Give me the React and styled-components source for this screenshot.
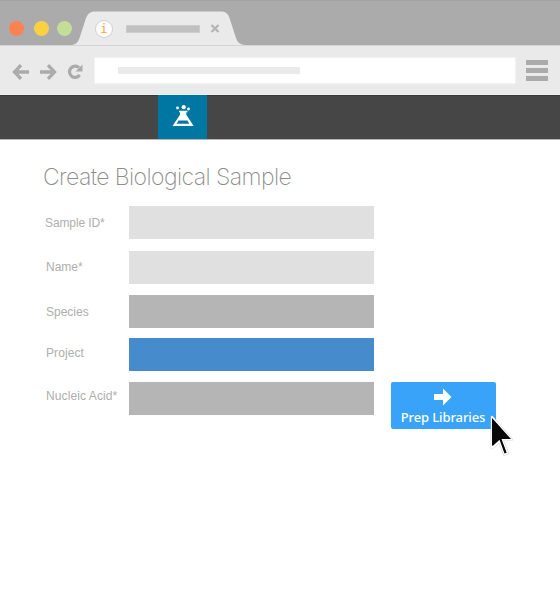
import React from 'react';
import styled, { createGlobalStyle } from 'styled-components';

const GlobalStyle = createGlobalStyle`
  * { box-sizing: border-box; }
  body { margin: 0; background: #fff; }
`;

const Window = styled.div`
  width: 560px;
  height: 600px;
  overflow: hidden;
  background: #fff;
  font-family: 'Liberation Sans', sans-serif;
`;

const TabStrip = styled.header`
  position: relative;
  display: flex;
  height: 45px;
  background: #ababab;
  box-shadow: inset 0 1px #a3a3a3;
`;

const WindowControls = styled.div`
  display: flex;
  width: 73px;
  padding: 21px 0 0 9px;
`;

const ControlDot = styled.span`
  flex: none;
  width: 15px;
  height: 15px;
  margin-right: ${({ $gap }) => $gap}px;
  border-radius: 50%;
  background: ${({ $color }) => $color};
`;

const Tab = styled.div`
  position: relative;
  display: flex;
  align-items: center;
  width: 174px;
  height: 45px;
  padding: 12px 0 0 22px;
`;

const TabShape = styled.svg`
  position: absolute;
  top: 0;
  left: 0;
`;

const Favicon = styled.span`
  position: relative;
  width: 18px;
  height: 18px;
  border: 1px solid #d2d0ce;
  border-radius: 50%;
  background: #fff;
  color: #f9a63f;
  font: 13px/15px 'DejaVu Sans Mono', monospace;
  text-align: center;
`;

const TabTitle = styled.span`
  position: relative;
  width: 74px;
  height: 8px;
  margin-left: 13px;
  background: #c0c0c0;
  border: 1px solid #cdcdcd;
`;

const CloseIcon = styled.svg`
  position: relative;
  margin-left: 10px;
`;

const Toolbar = styled.div`
  display: flex;
  height: 50px;
  padding: 12px 0 0 11px;
  background: #eaeaea;
  border-top: 1px solid #d5d5d5;
  border-bottom: 1px solid #f0f0f0;
`;

const NavIcon = styled.svg`
  flex: none;
  margin-top: 4px;
  margin-right: ${({ $gap }) => $gap}px;
`;

const AddressBar = styled.div`
  flex: none;
  width: 420px;
  height: 25px;
  padding: 9px 0 0 23px;
  background: #fff;
  box-shadow: 0 0 0 1px #f2f2f2;
`;

const AddressText = styled.div`
  width: 182px;
  height: 7px;
  background: #eaeaea;
`;

const Menu = styled.div`
  display: flex;
  flex-direction: column;
  gap: 3px;
  margin: 2px 0 0 11px;
`;

const MenuBar = styled.span`
  width: 22px;
  height: 5px;
  background: #ababab;
`;

const NavBar = styled.nav`
  display: flex;
  height: 45px;
  padding-left: 158px;
  background: #464646;
  border-top: 1px solid #383838;
  border-bottom: 1px solid #b5b5b5;
`;

const AppTile = styled.div`
  width: 49px;
  height: 44px;
  margin-top: -1px;
  background: #0076a3;
`;

const Main = styled.main`
  padding: 21px 0 0 42px;
`;

const Title = styled.h1`
  height: 45px;
  margin: 0;
  padding-left: 1px;
  color: #8c8c8c;
  font-family: Inter, 'Liberation Sans', sans-serif;
  font-size: 23px;
  font-weight: 200;
  line-height: 32px;
  letter-spacing: -0.58px;
  white-space: nowrap;
`;

const Row = styled.div`
  display: flex;
  height: 33px;
  margin-bottom: ${({ $gap }) => $gap}px;
`;

const Label = styled.label`
  flex: none;
  width: 87px;
  padding-top: ${({ $drop }) => $drop}px;
  padding-left: ${({ $indent }) => $indent}px;
  color: #aeaeae;
  font-size: 12px;
  line-height: 16px;
  letter-spacing: ${({ $track }) => $track}px;
  white-space: nowrap;
`;

const Field = styled.div`
  flex: none;
  width: 245px;
  height: 33px;
  background: ${({ $color }) => $color};
`;

const PrepButton = styled.button`
  position: relative;
  flex: none;
  display: flex;
  flex-direction: column;
  align-items: center;
  width: 105px;
  height: 47px;
  margin-left: 17px;
  padding: 6px 1px 0 0;
  border: 0;
  border-radius: 2px;
  background: #38a3f8;
  color: #fff;
  font: 500 13px/18px 'Noto Sans', sans-serif;
  white-space: nowrap;
`;

const ButtonText = styled.span`
  margin-top: 2px;
  letter-spacing: ${({ $track }) => $track}px;
`;

const Pointer = styled.svg`
  position: absolute;
  left: 98px;
  top: 30px;
`;

const rows = [
  { text: 'Sample ID*', indent: 3, drop: 9, track: -0.1, color: '#e0e0e0', gap: 12 },
  { text: 'Name*', indent: 4, drop: 8, track: 0, color: '#e0e0e0', gap: 11 },
  { text: 'Species', indent: 4, drop: 9, track: 0, color: '#b5b5b5', gap: 10 },
  { text: 'Project', indent: 4, drop: 7, track: 0.1, color: '#468ccc', gap: 11 },
  { text: 'Nucleic Acid*', indent: 4, drop: 6, track: 0.1, color: '#b5b5b5', gap: 0, action: true },
];

function PrepAction() {
  return (
    <PrepButton>
      <svg width="18" height="18" viewBox="0 0 18 18" fill="#fff">
        <path d="M0 6h9V0.5L17.5 9 9 17.5V12H0z" />
      </svg>
      <ButtonText $track={-0.1}>Prep Libraries</ButtonText>
      <Pointer width="26" height="46" viewBox="0 0 26 46">
        <path d="M3 5V36L10.500 29 15.500 42.500 18.500 41 13 27.500H22.500z" fill="none" stroke="#ccc" strokeWidth="2.600" strokeLinejoin="round" />
        <path d="M3 5V36L10.500 29 15.500 42.500 18.500 41 13 27.500H22.500z" fill="#111" stroke="#fff" strokeWidth="1.800" strokeLinejoin="round" />
        <path d="M3 6V34L10.500 27.500 15.500 41.500 17.500 40.500 12.500 27H22z" fill="#080808" />
      </Pointer>
    </PrepButton>
  );
}

export default function App() {
  return (
    <Window>
      <GlobalStyle />
      <TabStrip>
        <WindowControls>
          <ControlDot $color="#fc8253" $gap={10} />
          <ControlDot $color="#fcd141" $gap={8} />
          <ControlDot $color="#c4de97" $gap={0} />
        </WindowControls>
        <Tab>
          <TabShape width="174" height="45" viewBox="0 0 174 45">
            <path d="M-2 45C3 45 5 42 6.500 38L13 18Q15.500 11.500 21 11.500H149Q154.500 11.500 156.500 18L163 38Q165 45 172 45Z" fill="#eaeaea" />
          </TabShape>
          <Favicon>i</Favicon>
          <TabTitle />
          <CloseIcon width="10" height="9" viewBox="0 0 10 9">
            <path d="M1.500 1L8.500 8M8.500 1L1.500 8" stroke="#b5b5b5" strokeWidth="2.300" />
          </CloseIcon>
        </Tab>
      </TabStrip>
      <Toolbar>
        <NavIcon $gap={10} width="19" height="20" viewBox="0 0 19 20" fill="none" stroke="#ababab" strokeWidth="3.300">
          <path d="M18 10H3.500M10 3.200L3.500 10L10 16.800" />
        </NavIcon>
        <NavIcon $gap={8} width="19" height="20" viewBox="0 0 19 20" fill="none" stroke="#ababab" strokeWidth="3.300">
          <path d="M0 10H14.500M8 3.200L14.500 10L8 16.800" />
        </NavIcon>
        <NavIcon $gap={12} width="16" height="20" viewBox="0 0 16 20">
          <path d="M12 5.700A5.600 5.600 0 1 0 12.700 13" fill="none" stroke="#ababab" strokeWidth="3.200" />
          <path d="M15.500 2.500V9.500H8.500z" fill="#ababab" />
        </NavIcon>
        <AddressBar>
          <AddressText />
        </AddressBar>
        <Menu>
          <MenuBar />
          <MenuBar />
          <MenuBar />
        </Menu>
      </Toolbar>
      <NavBar>
        <AppTile>
          <svg width="49" height="44" viewBox="0 0 49 44" fill="#fff">
            <circle cx="19.500" cy="13" r="1.400" />
            <circle cx="25.700" cy="12.200" r="2.100" />
            <circle cx="30.500" cy="14" r="1.400" />
            <path d="M21 15.700H29.500V17.300H28.300V19.800L35.700 31H14.500L22 19.800V17.300H21zM20.500 25.500L18.700 28.700H31.300L29.500 25.500z" fillRule="evenodd" />
          </svg>
        </AppTile>
      </NavBar>
      <Main>
        <Title>Create Biological Sample</Title>
        {rows.map((row) => (
          <Row key={row.text} $gap={row.gap}>
            <Label $indent={row.indent} $drop={row.drop} $track={row.track}>{row.text}</Label>
            <Field $color={row.color} />
            {row.action && <PrepAction />}
          </Row>
        ))}
      </Main>
    </Window>
  );
}
